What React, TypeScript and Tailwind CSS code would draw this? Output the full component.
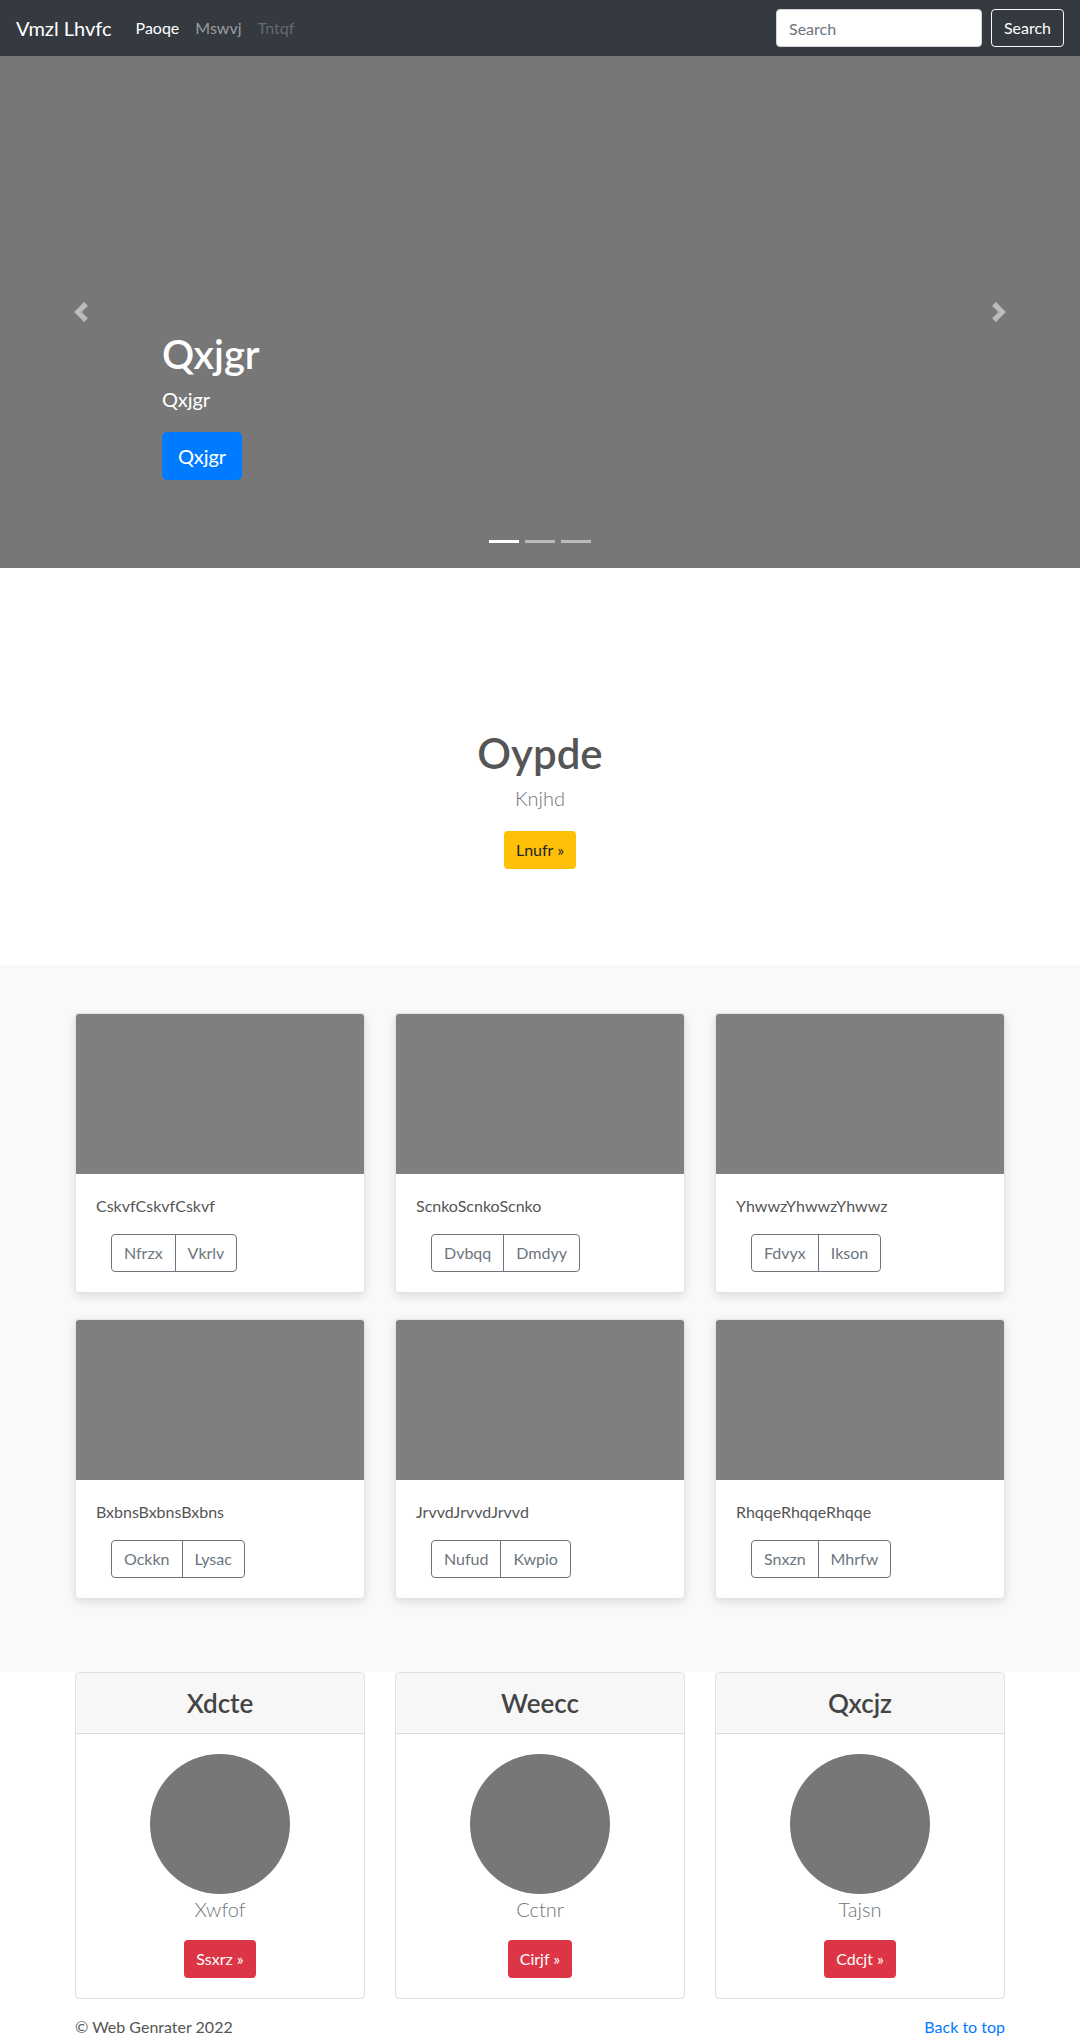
const albums = [
  { title: "CskvfCskvfCskvf", left: "Nfrzx", right: "Vkrlv" },
  { title: "ScnkoScnkoScnko", left: "Dvbqq", right: "Dmdyy" },
  { title: "YhwwzYhwwzYhwwz", left: "Fdvyx", right: "Ikson" },
  { title: "BxbnsBxbnsBxbns", left: "Ockkn", right: "Lysac" },
  { title: "JrvvdJrvvdJrvvd", left: "Nufud", right: "Kwpio" },
  { title: "RhqqeRhqqeRhqqe", left: "Snxzn", right: "Mhrfw" },
];

const people = [
  { header: "Xdcte", name: "Xwfof", action: "Ssxrz" },
  { header: "Weecc", name: "Cctnr", action: "Cirjf" },
  { header: "Qxcjz", name: "Tajsn", action: "Cdcjt" },
];

function Chevron({ dir }: { dir: "prev" | "next" }) {
  return (
    <svg viewBox="0 0 8 8" className="w-5 h-5" fill="#fff">
      {dir === "prev" ? (
        <path d="M5.25 0l-4 4 4 4 1.5-1.5L4.25 4l2.5-2.5L5.25 0z" />
      ) : (
        <path d="M2.75 0l-1.5 1.5L3.75 4l-2.5 2.5L2.75 8l4-4-4-4z" />
      )}
    </svg>
  );
}

export default function App() {
  return (
    <div className="min-h-[2040px] bg-white font-['Segoe_UI','Lato','Noto_Sans',sans-serif] text-[#212529]">
      {/* Navbar */}
      <nav className="h-14 bg-[#343a40] flex items-center px-4">
        <span className="text-xl text-white mr-4">Vmzl Lhvfc</span>
        <div className="flex text-base">
          <span className="px-2 text-white">Paoqe</span>
          <span className="px-2 text-white/50">Mswvj</span>
          <span className="px-2 text-white/25">Tntqf</span>
        </div>
        <div className="ml-auto flex items-center gap-[9px]">
          <input
            placeholder="Search"
            className="w-[206px] h-[38px] rounded bg-white border border-[#ced4da] px-3 text-base text-[#495057] placeholder:text-[#6c757d] outline-none"
          />
          <button className="h-[38px] w-[73px] rounded border border-[#f8f9fa] text-white text-base">
            Search
          </button>
        </div>
      </nav>

      {/* Carousel */}
      <div className="relative h-[512px] bg-[#777] flex flex-col justify-end pl-[162px] pb-[88px]">
        <h1 className="text-[40px] leading-[48px] font-semibold text-white mb-[6px]">Qxjgr</h1>
        <p className="text-xl leading-[30px] text-white mb-[18px]">Qxjgr</p>
        <button className="self-start h-12 px-4 rounded-[5px] bg-[#007bff] text-white text-xl">
          Qxjgr
        </button>

        <div className="absolute left-0 top-0 h-full w-[162px] flex items-center justify-center opacity-50">
          <Chevron dir="prev" />
        </div>
        <div className="absolute right-0 top-0 h-full w-[162px] flex items-center justify-center opacity-50">
          <Chevron dir="next" />
        </div>
        <div className="absolute bottom-[25px] left-0 right-0 flex justify-center gap-[6px]">
          <span className="w-[30px] h-[3px] bg-white" />
          <span className="w-[30px] h-[3px] bg-white/50" />
          <span className="w-[30px] h-[3px] bg-white/50" />
        </div>
      </div>

      {/* Intro */}
      <section className="flex flex-col items-center pt-[161px] pb-[96px]">
        <h1 className="text-[42px] leading-[48px] font-semibold text-[#555]">Oypde</h1>
        <p className="text-xl leading-[30px] font-light text-[#6c757d] mt-[6px] mb-[18px]">Knjhd</p>
        <button className="h-[38px] px-3 rounded bg-[#ffc107] text-[#212529] text-base">
          Lnufr »
        </button>
      </section>

      {/* Album */}
      <section className="bg-[#f8f9fa] pt-12 pb-[73px]">
        <div className="w-[930px] mx-auto grid grid-cols-3 gap-x-[30px] gap-y-[26px]">
          {albums.map((a) => (
            <div
              key={a.title}
              className="bg-white rounded border border-black/10 overflow-hidden shadow-[0_3px_10px_rgba(0,0,0,0.12)]"
            >
              <div className="h-[160px] bg-[#7f7f7f]" />
              <div className="p-5">
                <p className="text-base leading-6 text-[#555] mb-4">{a.title}</p>
                <div className="ml-[15px] inline-flex border border-[#6c757d] rounded text-[#6c757d]">
                  <span className="h-9 px-3 flex items-center border-r border-[#6c757d]">{a.left}</span>
                  <span className="h-9 px-3 flex items-center">{a.right}</span>
                </div>
              </div>
            </div>
          ))}
        </div>
      </section>

      {/* People */}
      <section className="w-[930px] mx-auto grid grid-cols-3 gap-x-[30px]">
        {people.map((p) => (
          <div key={p.header} className="rounded border border-black/12 overflow-hidden">
            <div className="h-[61px] bg-[#f7f7f7] border-b border-black/12 flex items-center justify-center">
              <h4 className="text-[26px] font-semibold text-[#444]">{p.header}</h4>
            </div>
            <div className="p-5 flex flex-col items-center">
              <div className="w-[140px] h-[140px] rounded-full bg-[#777]" />
              <p className="text-xl leading-[30px] font-light text-[#6c757d]">{p.name}</p>
              <button className="mt-4 h-[38px] px-3 rounded bg-[#dc3545] text-white text-base">
                {p.action} »
              </button>
            </div>
          </div>
        ))}
      </section>

      {/* Footer */}
      <footer className="w-[930px] mx-auto mt-4 pb-8 flex justify-between text-base leading-6">
        <span className="text-[#555]">© Web Genrater 2022</span>
        <span className="text-[#007bff]">Back to top</span>
      </footer>
    </div>
  );
}
